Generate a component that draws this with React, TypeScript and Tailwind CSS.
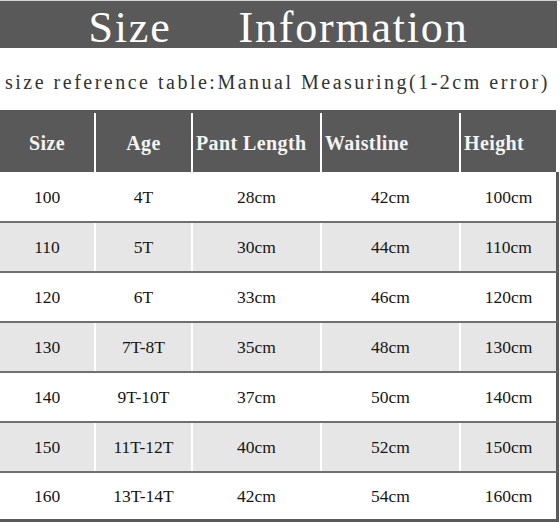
import React from "react";

const serif = { fontFamily: '"Liberation Serif", "Times New Roman", serif' };

const widths = ["w-[94px]", "w-[95px]", "w-[127px]", "w-[137px]", "w-[95px]"];

const rows = [
  ["100", "4T", "28cm", "42cm", "100cm"],
  ["110", "5T", "30cm", "44cm", "110cm"],
  ["120", "6T", "33cm", "46cm", "120cm"],
  ["130", "7T-8T", "35cm", "48cm", "130cm"],
  ["140", "9T-10T", "37cm", "50cm", "140cm"],
  ["150", "11T-12T", "40cm", "52cm", "150cm"],
  ["160", "13T-14T", "42cm", "54cm", "160cm"],
];

const heights = ["h-[49px]", "h-[50px]", "h-[50px]", "h-[50px]", "h-[50px]", "h-[50px]", "h-[48px]"];

function Sep({ header }: { header?: boolean }) {
  return header ? (
    <div className="w-[2px] shrink-0 mt-[3px] bg-white" />
  ) : (
    <div className="w-[2px] shrink-0 bg-white" />
  );
}

export default function App() {
  const headers: { t: string; left: boolean }[] = [
    { t: "Size", left: false },
    { t: "Age", left: false },
    { t: "Pant Length", left: true },
    { t: "Waistline", left: true },
    { t: "Height", left: true },
  ];
  return (
    <div className="w-[560px] h-[522px] bg-white overflow-hidden" style={serif}>
      <div className="h-[1px] w-[560px] bg-[#d2d2d2]" />
      <div className="w-[557px] h-[47px] bg-[#595959] flex items-center justify-center gap-[67px] pt-[6px] text-[44px] leading-none text-white tracking-[1.8px]">
        <span>Size</span>
        <span>Information</span>
      </div>
      <div className="h-[62px] flex items-center pl-[5px] pt-[6px]">
        <span className="text-[20px] leading-none text-[#333333] tracking-[2.5px] whitespace-pre">
          size reference table:Manual Measuring(1-2cm error)
        </span>
      </div>
      <div className="flex w-[556px] h-[62px] bg-[#595959]">
        {headers.map((h, i) => (
          <React.Fragment key={i}>
            {i > 0 && <Sep header />}
            <div
              className={`${widths[i]} shrink-0 flex items-center ${
                h.left ? "justify-start pl-[3px]" : "justify-center"
              } pt-[4px]`}
            >
              <span className="text-[20px] font-bold leading-none text-[#f4f4f4] tracking-[0.4px] whitespace-pre">
                {h.t}
              </span>
            </div>
          </React.Fragment>
        ))}
      </div>
      {rows.map((r, ri) => (
        <div
          key={ri}
          className={`flex w-[559px] ${heights[ri]} border-r-[3px] border-r-[#5a5a5a] ${
            ri > 0 ? "border-t-2 border-t-[#707070]" : ""
          } ${ri % 2 === 1 ? "bg-[#e6e6e6]" : "bg-white"}`}
        >
          {r.map((c, ci) => (
            <React.Fragment key={ci}>
              {ci > 0 && <Sep />}
              <div className={`${widths[ci]} shrink-0 flex items-center justify-center pt-[2px]`}>
                <span className="text-[17.5px] leading-none text-[#151515] whitespace-pre">
                  {c}
                </span>
              </div>
            </React.Fragment>
          ))}
        </div>
      ))}
      <div className="w-[559px] h-[3px] bg-[#5a5a5a]" />
    </div>
  );
}
